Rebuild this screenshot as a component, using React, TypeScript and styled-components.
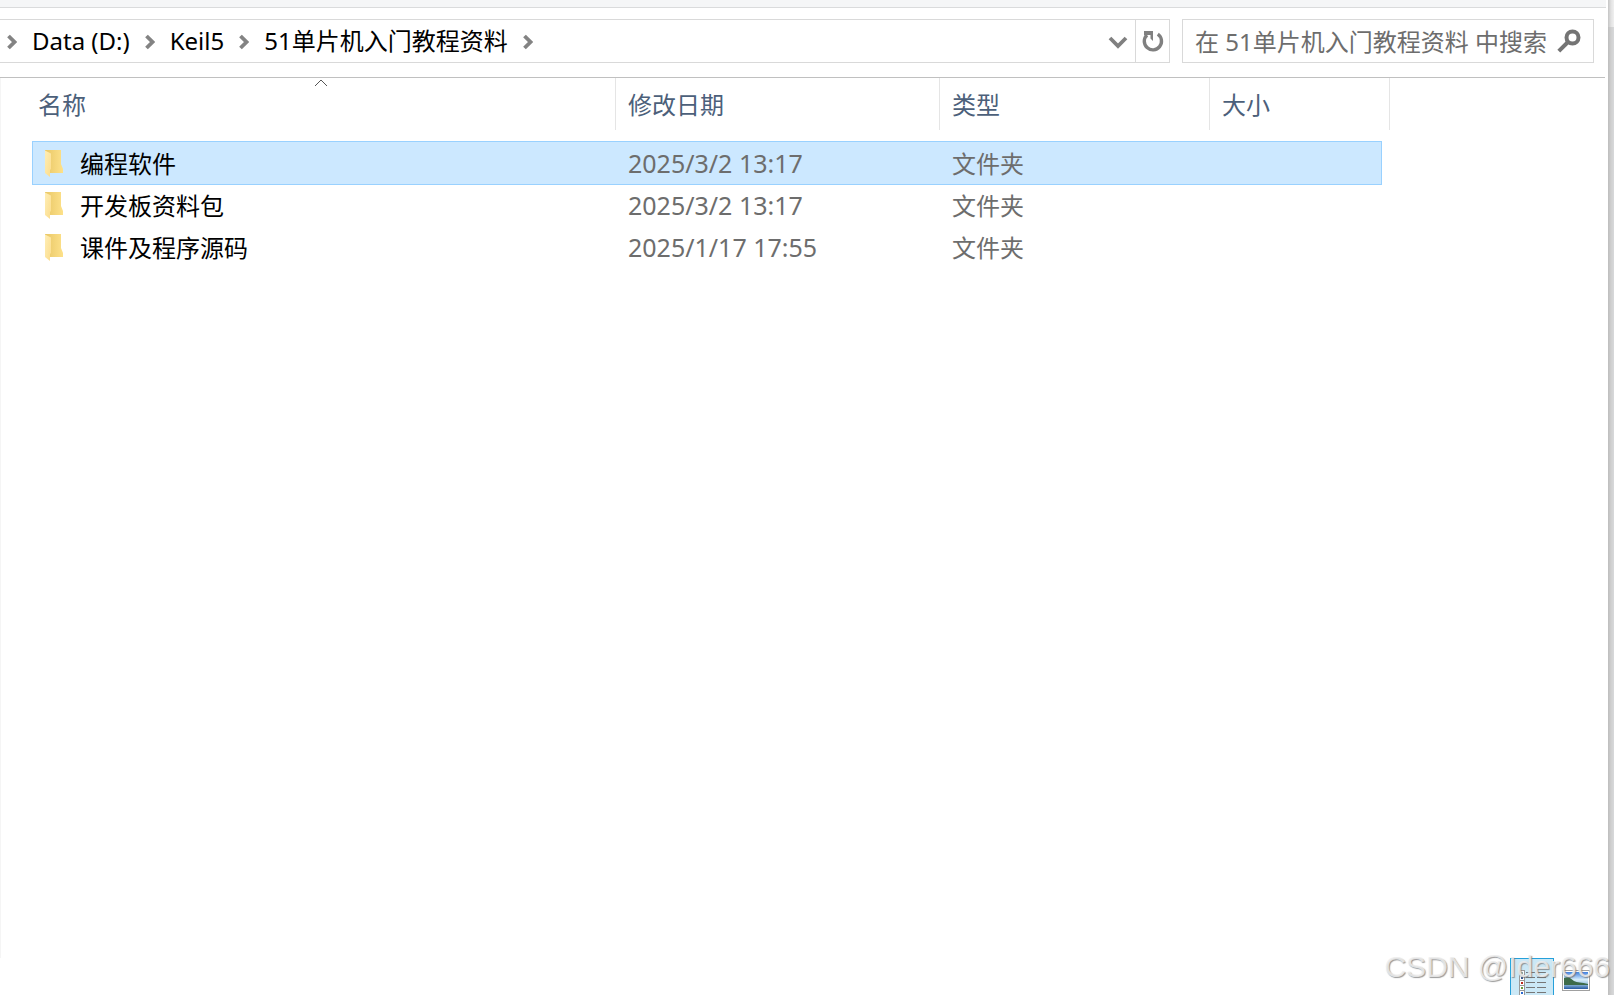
import React from "react";
import styled, { createGlobalStyle } from "styled-components";

const GlobalStyle = createGlobalStyle`
  * { box-sizing: border-box; }
  html, body, #root { height: 100%; }
  body {
    margin: 0;
    overflow: hidden;
    background: #d3d3d3;
    font-family: "Noto Sans", "Noto Sans CJK SC", sans-serif;
    font-size: 24px;
    color: #000;
  }
  button, input { font: inherit; color: inherit; }
`;

const Desktop = styled.div`
  display: flex;
  min-height: 100vh;
  position: relative;
`;

const ShadowEdge = styled.div`
  flex: 0 0 6px;
  background: linear-gradient(90deg, #bdbdbd, #cfcfcf 50%, #d8d9db);
  &::before {
    content: "";
    display: block;
    height: 27px;
    background: linear-gradient(90deg, #c4c4c4, #e2e2e2 50%, #f0f0f0);
  }
`;

const Window = styled.main`
  flex: 1;
  min-width: 0;
  display: flex;
  flex-direction: column;
  background: #fff;
`;

const RibbonEdge = styled.div`
  flex: 0 0 8px;
  margin-right: 2px;
  background: #f5f6f7;
  border-bottom: 1px solid #dadbdc;
`;

const NavBar = styled.header`
  flex: 0 0 70px;
  display: flex;
  align-items: flex-start;
  gap: 12px;
  margin-right: 3px;
  padding: 11px 11px 0 0;
  border-bottom: 1px solid #c0c0c0;
`;

const AddressBar = styled.div`
  flex: 1;
  min-width: 0;
  height: 44px;
  display: flex;
  align-items: stretch;
  border: 1px solid #d9d9d9;
  border-left: 0;
`;

const Crumbs = styled.nav`
  flex: 1;
  display: flex;
  align-items: center;
  gap: 15px;
  padding-left: 7px;
`;

const Crumb = styled.a`
  color: #000;
  text-decoration: none;
  line-height: 32px;
  white-space: nowrap;
`;

const IconButton = styled.button<{ $divided?: boolean }>`
  width: 34px;
  padding: 0;
  border: 0;
  border-left: ${(p) => (p.$divided ? "1px solid #d9d9d9" : "0")};
  background: none;
  display: flex;
  align-items: center;
  justify-content: center;
`;

const SearchBox = styled.form`
  flex: 0 0 412px;
  height: 44px;
  display: flex;
  align-items: center;
  padding: 0 12px;
  border: 1px solid #d9d9d9;
`;

const SearchInput = styled.input`
  flex: 1;
  min-width: 0;
  height: 32px;
  padding: 0;
  border: 0;
  outline: 0;
  background: none;
  &::placeholder { color: #6d6d6d; opacity: 1; }
`;

const SearchButton = styled.button`
  padding: 0;
  border: 0;
  background: none;
  display: flex;
`;

const Content = styled.section`
  flex: 1;
  border-left: 1px solid #f5f5f5;
  padding-left: 31px;
`;

const FileTable = styled.table`
  display: block;
  font-size: 24px;
  line-height: 32px;
`;

const Head = styled.thead`
  display: block;
`;

const Body = styled.tbody`
  display: block;
  padding-top: 12px;
`;

const HeadRow = styled.tr`
  display: grid;
  grid-template-columns: 584px 324px 270px 180px;
  width: 1358px;
  height: 52px;
`;

const HeadCell = styled.th<{ $first?: boolean }>`
  position: relative;
  padding: 11px 12px 0 ${(p) => (p.$first ? 6 : 12)}px;
  border-right: 1px solid #e5e5e5;
  text-align: left;
  font-weight: 400;
  color: #4c607a;
`;

const SortMark = styled.svg`
  position: absolute;
  top: 0;
  left: 50%;
  margin-left: -10px;
`;

const Row = styled.tr<{ $selected?: boolean }>`
  display: grid;
  grid-template-columns: 584px 324px 270px 1fr;
  width: 1350px;
  height: 42px;
  background: ${(p) => (p.$selected ? "#cce8ff" : "transparent")};
  box-shadow: ${(p) => (p.$selected ? "0 -1px #99d1ff, 0 1px #99d1ff, inset 1px 0 #99d1ff, inset -1px 0 #99d1ff" : "none")};
`;

const Cell = styled.td`
  display: flex;
  align-items: center;
  padding: 2px 12px 0;
  color: #6d6d6d;
`;

const NameCell = styled(Cell)`
  gap: 16px;
  color: #000;
`;

const DateCell = styled(Cell)`
  padding-top: 0;
  font-size: 25px;
`;

const StatusBar = styled.footer`
  flex: 0 0 37px;
  display: flex;
  align-items: flex-start;
  justify-content: flex-end;
  padding-right: 10px;
`;

const ViewButton = styled.button<{ $active?: boolean }>`
  width: 44px;
  height: 37px;
  padding: 0;
  display: flex;
  justify-content: center;
  border: ${(p) => (p.$active ? "1px solid #26a0da" : "0")};
  border-bottom: 0;
  background: ${(p) => (p.$active ? "#cbe8f6" : "none")};
`;

const Watermark = styled.div`
  position: absolute;
  right: 4px;
  bottom: 8px;
  font-family: "Liberation Sans", Arial, sans-serif;
  font-size: 30px;
  line-height: 40px;
  color: rgba(238, 238, 238, 0.85);
  text-shadow: 1px 1px 1px rgba(110, 110, 110, 0.7);
  pointer-events: none;
`;

const Chevron = () => (
  <svg width="10" height="18" viewBox="0 0 10 18" aria-hidden="true">
    <path d="M1.500 4 7.500 10 1.500 16" fill="none" stroke="#838383" strokeWidth="3.800" />
  </svg>
);

const FolderIcon = () => (
  <svg width="20" height="28" viewBox="0 0 20 28" aria-hidden="true">
    <defs>
      <linearGradient id="back" x1="0" x2="1">
        <stop offset="0" stopColor="#e9c766" />
        <stop offset="1" stopColor="#fde18a" />
      </linearGradient>
      <linearGradient id="front" x1="0" x2="1" y2="1">
        <stop offset="0" stopColor="#ffeeb5" />
        <stop offset="1" stopColor="#fbdc8c" />
      </linearGradient>
    </defs>
    <path d="M1 0H17V14L19 19V23H6L1 20Z" fill="url(#back)" />
    <path d="M1 .5 7 3.500V19L6 20V27L1 23Z" fill="url(#front)" />
  </svg>
);

const files = [
  { name: "编程软件", date: "2025/3/2 13:17", type: "文件夹", selected: true },
  { name: "开发板资料包", date: "2025/3/2 13:17", type: "文件夹" },
  { name: "课件及程序源码", date: "2025/1/17 17:55", type: "文件夹" },
];

const crumbs = ["Data (D:)", "Keil5", "51单片机入门教程资料"];

export default function App() {
  return (
    <Desktop>
      <GlobalStyle />
      <Window>
        <RibbonEdge />
        <NavBar>
          <AddressBar>
            <Crumbs aria-label="路径">
              <Chevron />
              {crumbs.map((c) => (
                <React.Fragment key={c}>
                  <Crumb href="#">{c}</Crumb>
                  <Chevron />
                </React.Fragment>
              ))}
            </Crumbs>
            <IconButton aria-label="展开">
              <svg width="20" height="16" viewBox="0 0 20 16">
                <path d="M2 5 10 13 18 5" fill="none" stroke="#808080" strokeWidth="3.800" />
              </svg>
            </IconButton>
            <IconButton $divided aria-label="刷新">
              <svg width="22" height="24" viewBox="0 0 22 24">
                <path d="M15.800 5.200A8.600 8.600 0 1 1 5 6" fill="none" stroke="#808080" strokeWidth="3.400" />
                <path d="M2 2H11V12L8.500 9.500V6H2Z" fill="#808080" />
              </svg>
            </IconButton>
          </AddressBar>
          <SearchBox>
            <SearchInput aria-label="搜索" placeholder="在 51单片机入门教程资料 中搜索" />
            <SearchButton type="button" aria-label="搜索">
              <svg width="24" height="24" viewBox="0 0 24 24">
                <circle cx="15.500" cy="8.500" r="6" fill="none" stroke="#747474" strokeWidth="4" />
                <path d="M11.500 12.500 1.800 22.200" stroke="#747474" strokeWidth="4" />
              </svg>
            </SearchButton>
          </SearchBox>
        </NavBar>
        <Content>
          <FileTable>
            <Head>
              <HeadRow>
                <HeadCell $first aria-sort="ascending">
                  名称
                  <SortMark width="14" height="9" viewBox="0 0 14 9">
                    <path d="M1 8 7 2 13 8" fill="none" stroke="#555" strokeWidth="1" />
                  </SortMark>
                </HeadCell>
                <HeadCell>修改日期</HeadCell>
                <HeadCell>类型</HeadCell>
                <HeadCell>大小</HeadCell>
              </HeadRow>
            </Head>
            <Body>
              {files.map((f) => (
                <Row key={f.name} $selected={f.selected}>
                  <NameCell>
                    <FolderIcon />
                    {f.name}
                  </NameCell>
                  <DateCell>{f.date}</DateCell>
                  <Cell>{f.type}</Cell>
                  <Cell />
                </Row>
              ))}
            </Body>
          </FileTable>
        </Content>
        <StatusBar>
          <ViewButton $active aria-label="详细信息">
            <svg width="30" height="36" viewBox="0 0 30 36">
              {[11, 16, 21, 26, 31].map((y, i) => (
                <g key={y}>
                  <rect x="2.500" y={y + 0.500} width="5" height="5" fill="#fff" stroke="#999" />
                  <rect x="4" y={y + 2} width="2" height="2" fill={["#8aa", "#3a5a95", "#c0281c", "#6a9a3a", "#2a6ad0"][i]} />
                  <path d={`M9 ${y + 2.500}h9M20 ${y + 2.500}h9`} stroke="#777" />
                </g>
              ))}
            </svg>
          </ViewButton>
          <ViewButton aria-label="大图标">
            <svg width="28" height="36" viewBox="0 0 28 36">
              <defs>
                <linearGradient id="sky" x2="0" y2="1">
                  <stop offset="0" stopColor="#3f7fe0" />
                  <stop offset="0.450" stopColor="#d8eefa" />
                  <stop offset="0.700" stopColor="#9cc4e0" />
                  <stop offset="1" stopColor="#2458a0" />
                </linearGradient>
              </defs>
              <rect x="0.500" y="12.500" width="27" height="20" fill="#fff" stroke="#a0a0a0" />
              <rect x="2" y="14" width="24" height="17" fill="url(#sky)" />
              <path d="M2 20c5-2 7 1 10 3s8 1 14 3v1H2Z" fill="#3d6b4a" />
            </svg>
          </ViewButton>
        </StatusBar>
      </Window>
      <ShadowEdge />
      <Watermark>CSDN @Ider666</Watermark>
    </Desktop>
  );
}
